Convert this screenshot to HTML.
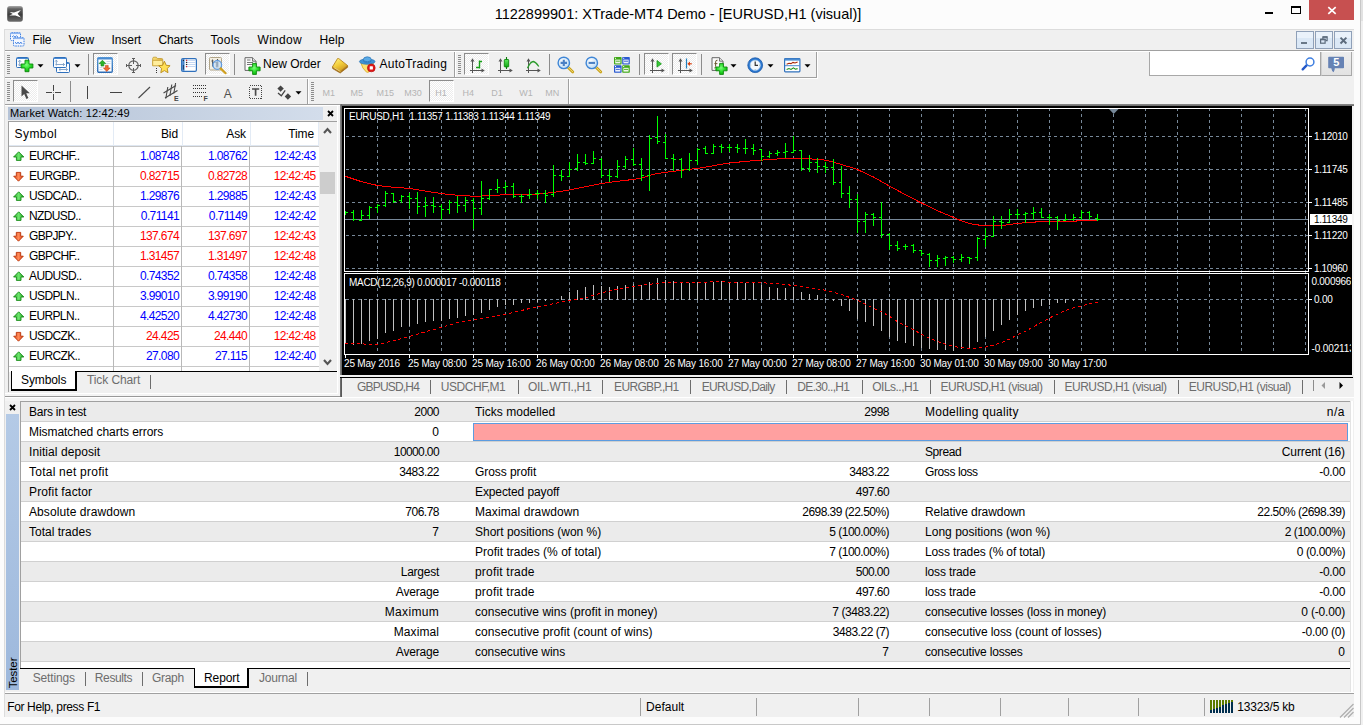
<!DOCTYPE html><html><head><meta charset="utf-8"><title>XTrade-MT4</title><style>html,body{margin:0;padding:0}
body{width:1363px;height:725px;overflow:hidden;position:relative;background:#fcfcfc;font-family:"Liberation Sans",sans-serif;font-size:12px;color:#000}
div,span.t,svg.abs{position:absolute;box-sizing:border-box}
.t{white-space:nowrap;line-height:16px;height:16px}
.r{text-align:right}
.ic{width:0;height:0}
.ic svg{position:absolute;left:0;top:0;overflow:visible}
.ui{font-size:12px;letter-spacing:-0.1px}
.tah{font-size:11px}
.ch{font-size:10px;letter-spacing:-0.21px;color:#fff;line-height:11px;height:11px}
.gr{color:#6d6d6d}
.blue{color:#0000ff}.red{color:#ff0000}
.dis{color:#b4b4b4}
.num{letter-spacing:-0.62px}
</style></head><body>
<div style="left:1360px;top:0px;width:1px;height:725px;background:#c8c8c8"></div>
<div style="left:1361px;top:0px;width:2px;height:725px;background:#f0f0f0"></div>
<div style="left:1361px;top:0px;width:2px;height:21px;background:#e2e2e2"></div>
<div style="left:0px;top:724px;width:1361px;height:1px;background:#c8c8c8"></div>
<div style="left:4px;top:29px;width:1350px;height:688px;background:#f0f0f0"></div>
<div style="left:4px;top:29px;width:1350px;height:1px;background:#dcdcdc"></div>
<div style="left:4px;top:29px;width:1px;height:688px;background:#dcdcdc"></div>
<span class="t" style="left:378px;top:5px;width:600px;text-align:center;font-size:14.5px;line-height:19px;height:19px;color:#000">1122899901: XTrade-MT4 Demo - [EURUSD,H1 (visual)]</span>
<div style="left:1309px;top:0px;width:45px;height:20px;background:#c75050"></div>
<svg class="abs" style="left:1309px;top:0" width="45" height="20"><path d="M19.3 7.200L26.700 13.900M26.700 7.200L19.300 13.900" stroke="#fff" stroke-width="1.700" fill="none"/></svg>
<div style="left:1265px;top:12px;width:8px;height:2px;background:#000"></div>
<div style="left:1291px;top:6px;width:10px;height:8px;border:1px solid #000;border-top:2px solid #000"></div>
<div style="left:340px;top:104px;width:1014px;height:2px;background:linear-gradient(#8c8c8c,#696969)"></div>
<div style="left:340px;top:104px;width:2px;height:271px;background:linear-gradient(90deg,#8c8c8c,#606060)"></div>
<div style="left:342px;top:106px;width:1010px;height:269px;background:#000"></div>
<div style="left:1352px;top:106px;width:2px;height:269px;background:#f4f4f4"></div>
<svg class="abs" style="left:342px;top:106px" width="1010" height="270" viewBox="342 106 1010 270" shape-rendering="crispEdges"><path d="M346 136.5H1308M346 169.5H1308M346 202.5H1308M346 235.5H1308M346 268.5H1308M346 299.5H1308" stroke="#778899" stroke-dasharray="3 3" fill="none"/><path d="M377.5 108V273M377.5 276V354M409.5 108V273M409.5 276V354M441.5 108V273M441.5 276V354M473.5 108V273M473.5 276V354M505.5 108V273M505.5 276V354M537.5 108V273M537.5 276V354M569.5 108V273M569.5 276V354M601.5 108V273M601.5 276V354M633.5 108V273M633.5 276V354M665.5 108V273M665.5 276V354M697.5 108V273M697.5 276V354M729.5 108V273M729.5 276V354M761.5 108V273M761.5 276V354M793.5 108V273M793.5 276V354M825.5 108V273M825.5 276V354M857.5 108V273M857.5 276V354M889.5 108V273M889.5 276V354M921.5 108V273M921.5 276V354M953.5 108V273M953.5 276V354M985.5 108V273M985.5 276V354M1017.5 108V273M1017.5 276V354M1049.5 108V273M1049.5 276V354M1081.5 108V273M1081.5 276V354M1113.5 108V273M1113.5 276V354M1145.5 108V273M1145.5 276V354M1177.5 108V273M1177.5 276V354M1209.5 108V273M1209.5 276V354M1241.5 108V273M1241.5 276V354M1273.5 108V273M1273.5 276V354M1305.5 108V273M1305.5 276V354" stroke="#778899" stroke-dasharray="3 3" fill="none"/><path d="M345 219.5H1308" stroke="#778899" fill="none"/><path d="M344.5 108.5H1308.5V271.5H344.5ZM344.5 273.5H1308.5V354.5H344.5Z" stroke="#fff" fill="none"/><path d="M1309 136.5H1312M1309 169.5H1312M1309 202.5H1312M1309 235.5H1312M1309 268.5H1312M1309 299.5H1312" stroke="#fff" fill="none"/><path d="M345.5 355V358M409.5 355V358M473.5 355V358M537.5 355V358M601.5 355V358M665.5 355V358M729.5 355V358M793.5 355V358M857.5 355V358M921.5 355V358M985.5 355V358M1049.5 355V358" stroke="#fff" fill="none"/><path d="M1109 109H1118.5L1113.7 114Z" fill="#778899" shape-rendering="auto"/><polyline points="345,176.2 361,181.5 377.5,185.5 393,187.2 409.5,188.4 425,191 441.5,193.6 457,195.2 473.5,196.2 489,195.8 505.5,194.6 521,194.5 530,194.8 537.5,194.2 553,192.5 569.5,190 585,186.8 601.5,183.4 617,181.4 633.5,179.4 641.4,178.2 649.4,175.3 657,173.6 665.5,172.4 681,170.3 697.5,168.4 713,165.8 720,164.5 729.5,163.1 745,161.4 761.5,160.1 777,159 793.5,158.2 809,158.8 825.5,160.1 833,162 841.5,164.5 849,166.8 857.5,169.6 865,173 873.5,177 881,181.3 889.5,186.1 905,194.5 921.5,203 937,210.5 953.5,217.4 961,220.6 969.5,223.6 977,224.9 985.5,225.5 1001.5,225.5 1009,224.6 1017.5,223.3 1025,222.8 1033.5,222.4 1038.7,221.4 1076,221.4 1077,220.3 1097,220.3" stroke="#ff0000" stroke-width="1" fill="none" shape-rendering="crispEdges"/><path d="M345 211h1V215h-1ZM346 212h2v1h-2ZM353 210h1V221h-1ZM351 212h2v1h-2ZM354 219h2v1h-2ZM361 210h1V221h-1ZM359 220h2v1h-2ZM362 215h2v1h-2ZM369 206h1V219h-1ZM367 215h2v1h-2ZM370 207h2v1h-2ZM377 204h1V213h-1ZM375 207h2v1h-2ZM378 205h2v1h-2ZM385 191h1V207h-1ZM383 205h2v1h-2ZM386 193h2v1h-2ZM393 193h1V203h-1ZM391 193h2v1h-2ZM394 201h2v1h-2ZM401 195h1V203h-1ZM399 200h2v1h-2ZM402 196h2v1h-2ZM409 193h1V209h-1ZM407 196h2v1h-2ZM410 198h2v1h-2ZM417 192h1V214h-1ZM415 198h2v1h-2ZM418 206h2v1h-2ZM425 197h1V217h-1ZM423 206h2v1h-2ZM426 205h2v1h-2ZM433 197h1V213h-1ZM431 205h2v1h-2ZM434 206h2v1h-2ZM441 204h1V220h-1ZM439 206h2v1h-2ZM442 209h2v1h-2ZM449 200h1V214h-1ZM447 209h2v1h-2ZM450 202h2v1h-2ZM457 196h1V213h-1ZM455 202h2v1h-2ZM458 205h2v1h-2ZM465 197h1V212h-1ZM463 205h2v1h-2ZM466 200h2v1h-2ZM473 198h1V229h-1ZM471 200h2v1h-2ZM474 208h2v1h-2ZM481 181h1V215h-1ZM479 208h2v1h-2ZM482 198h2v1h-2ZM489 189h1V200h-1ZM487 198h2v1h-2ZM490 189h2v1h-2ZM497 179h1V193h-1ZM495 189h2v1h-2ZM498 187h2v1h-2ZM505 182h1V193h-1ZM503 187h2v1h-2ZM506 186h2v1h-2ZM513 183h1V198h-1ZM511 186h2v1h-2ZM514 196h2v1h-2ZM521 194h1V203h-1ZM519 196h2v1h-2ZM522 196h2v1h-2ZM529 189h1V199h-1ZM527 195h2v1h-2ZM530 194h2v1h-2ZM537 190h1V199h-1ZM535 193h2v1h-2ZM538 193h2v1h-2ZM545 190h1V203h-1ZM543 193h2v1h-2ZM546 195h2v1h-2ZM553 165h1V197h-1ZM551 194h2v1h-2ZM554 175h2v1h-2ZM561 170h1V181h-1ZM559 175h2v1h-2ZM562 176h2v1h-2ZM569 162h1V177h-1ZM567 176h2v1h-2ZM570 169h2v1h-2ZM577 154h1V171h-1ZM575 168h2v1h-2ZM578 162h2v1h-2ZM585 154h1V165h-1ZM583 162h2v1h-2ZM586 163h2v1h-2ZM593 151h1V164h-1ZM591 163h2v1h-2ZM594 158h2v1h-2ZM601 158h1V178h-1ZM599 159h2v1h-2ZM602 175h2v1h-2ZM609 169h1V182h-1ZM607 175h2v1h-2ZM610 176h2v1h-2ZM617 160h1V178h-1ZM615 176h2v1h-2ZM618 166h2v1h-2ZM625 156h1V169h-1ZM623 166h2v1h-2ZM626 159h2v1h-2ZM633 148h1V166h-1ZM631 159h2v1h-2ZM634 164h2v1h-2ZM641 158h1V181h-1ZM639 164h2v1h-2ZM642 175h2v1h-2ZM649 135h1V191h-1ZM647 175h2v1h-2ZM650 138h2v1h-2ZM657 116h1V144h-1ZM655 137h2v1h-2ZM658 141h2v1h-2ZM665 134h1V159h-1ZM663 142h2v1h-2ZM666 158h2v1h-2ZM673 154h1V171h-1ZM671 158h2v1h-2ZM674 159h2v1h-2ZM681 158h1V178h-1ZM679 159h2v1h-2ZM682 169h2v1h-2ZM689 153h1V171h-1ZM687 169h2v1h-2ZM690 160h2v1h-2ZM697 148h1V165h-1ZM695 160h2v1h-2ZM698 149h2v1h-2ZM705 146h1V154h-1ZM703 148h2v1h-2ZM706 153h2v1h-2ZM713 144h1V154h-1ZM711 153h2v1h-2ZM714 146h2v1h-2ZM721 144h1V153h-1ZM719 146h2v1h-2ZM722 147h2v1h-2ZM729 144h1V152h-1ZM727 147h2v1h-2ZM730 147h2v1h-2ZM737 144h1V153h-1ZM735 147h2v1h-2ZM738 148h2v1h-2ZM745 139h1V154h-1ZM743 148h2v1h-2ZM746 148h2v1h-2ZM753 144h1V155h-1ZM751 148h2v1h-2ZM754 150h2v1h-2ZM761 149h1V161h-1ZM759 149h2v1h-2ZM762 156h2v1h-2ZM769 151h1V158h-1ZM767 156h2v1h-2ZM770 153h2v1h-2ZM777 150h1V156h-1ZM775 153h2v1h-2ZM778 152h2v1h-2ZM785 143h1V158h-1ZM783 152h2v1h-2ZM786 151h2v1h-2ZM793 136h1V153h-1ZM791 152h2v1h-2ZM794 150h2v1h-2ZM801 150h1V171h-1ZM799 150h2v1h-2ZM802 168h2v1h-2ZM809 155h1V172h-1ZM807 168h2v1h-2ZM810 162h2v1h-2ZM817 158h1V173h-1ZM815 162h2v1h-2ZM818 166h2v1h-2ZM825 162h1V173h-1ZM823 166h2v1h-2ZM826 167h2v1h-2ZM833 159h1V185h-1ZM831 167h2v1h-2ZM834 182h2v1h-2ZM841 166h1V198h-1ZM839 182h2v1h-2ZM842 193h2v1h-2ZM849 186h1V208h-1ZM847 193h2v1h-2ZM850 199h2v1h-2ZM857 194h1V233h-1ZM855 199h2v1h-2ZM858 221h2v1h-2ZM865 212h1V233h-1ZM863 221h2v1h-2ZM866 214h2v1h-2ZM873 213h1V226h-1ZM871 214h2v1h-2ZM874 217h2v1h-2ZM881 202h1V238h-1ZM879 217h2v1h-2ZM882 234h2v1h-2ZM889 233h1V250h-1ZM887 234h2v1h-2ZM890 245h2v1h-2ZM897 241h1V251h-1ZM895 245h2v1h-2ZM898 248h2v1h-2ZM905 244h1V250h-1ZM903 246h2v1h-2ZM906 246h2v1h-2ZM913 244h1V253h-1ZM911 245h2v1h-2ZM914 250h2v1h-2ZM921 250h1V256h-1ZM919 250h2v1h-2ZM922 253h2v1h-2ZM929 253h1V267h-1ZM927 254h2v1h-2ZM930 260h2v1h-2ZM937 255h1V267h-1ZM935 260h2v1h-2ZM938 258h2v1h-2ZM945 256h1V266h-1ZM943 258h2v1h-2ZM946 257h2v1h-2ZM953 256h1V263h-1ZM951 257h2v1h-2ZM954 259h2v1h-2ZM961 254h1V262h-1ZM959 259h2v1h-2ZM962 257h2v1h-2ZM969 257h1V264h-1ZM967 257h2v1h-2ZM970 258h2v1h-2ZM977 237h1V261h-1ZM975 257h2v1h-2ZM978 238h2v1h-2ZM985 228h1V247h-1ZM983 239h2v1h-2ZM986 236h2v1h-2ZM993 216h1V237h-1ZM991 236h2v1h-2ZM994 221h2v1h-2ZM1001 216h1V229h-1ZM999 221h2v1h-2ZM1002 222h2v1h-2ZM1009 209h1V223h-1ZM1007 222h2v1h-2ZM1010 214h2v1h-2ZM1017 209h1V219h-1ZM1015 214h2v1h-2ZM1018 214h2v1h-2ZM1025 212h1V223h-1ZM1023 214h2v1h-2ZM1026 213h2v1h-2ZM1033 207h1V220h-1ZM1031 213h2v1h-2ZM1034 212h2v1h-2ZM1041 208h1V218h-1ZM1039 212h2v1h-2ZM1042 217h2v1h-2ZM1049 214h1V225h-1ZM1047 217h2v1h-2ZM1050 217h2v1h-2ZM1057 216h1V230h-1ZM1055 217h2v1h-2ZM1058 220h2v1h-2ZM1065 214h1V221h-1ZM1063 220h2v1h-2ZM1066 219h2v1h-2ZM1073 214h1V221h-1ZM1071 219h2v1h-2ZM1074 217h2v1h-2ZM1081 210h1V220h-1ZM1079 217h2v1h-2ZM1082 212h2v1h-2ZM1089 211h1V220h-1ZM1087 212h2v1h-2ZM1090 216h2v1h-2ZM1097 214h1V221h-1ZM1095 218h2v1h-2ZM1098 219h2v1h-2Z" fill="#00ff00"/><path d="M345 299h1V344h-1ZM353 299h1V345h-1ZM361 299h1V344h-1ZM369 299h1V341h-1ZM377 299h1V339h-1ZM385 299h1V333h-1ZM393 299h1V331h-1ZM401 299h1V327h-1ZM409 299h1V326h-1ZM417 299h1V324h-1ZM425 299h1V322h-1ZM433 299h1V321h-1ZM441 299h1V321h-1ZM449 299h1V319h-1ZM457 299h1V318h-1ZM465 299h1V316h-1ZM473 299h1V315h-1ZM481 299h1V313h-1ZM489 299h1V310h-1ZM497 299h1V307h-1ZM505 299h1V305h-1ZM513 299h1V305h-1ZM521 299h1V303h-1ZM529 299h1V303h-1ZM537 299h1V302h-1ZM545 299h1V301h-1ZM561 296h1V300h-1ZM569 292h1V300h-1ZM577 290h1V300h-1ZM585 287h1V300h-1ZM593 285h1V300h-1ZM601 286h1V300h-1ZM609 287h1V300h-1ZM617 286h1V300h-1ZM625 285h1V300h-1ZM633 284h1V300h-1ZM641 285h1V300h-1ZM649 282h1V300h-1ZM657 278h1V300h-1ZM665 280h1V300h-1ZM673 281h1V300h-1ZM681 283h1V300h-1ZM689 283h1V300h-1ZM697 282h1V300h-1ZM705 283h1V300h-1ZM713 282h1V300h-1ZM721 281h1V300h-1ZM729 282h1V300h-1ZM737 282h1V300h-1ZM745 283h1V300h-1ZM753 283h1V300h-1ZM761 285h1V300h-1ZM769 287h1V300h-1ZM777 288h1V300h-1ZM785 288h1V300h-1ZM793 287h1V300h-1ZM801 292h1V300h-1ZM809 294h1V300h-1ZM817 295h1V300h-1ZM825 298h1V300h-1ZM833 299h1V301h-1ZM841 299h1V306h-1ZM849 299h1V311h-1ZM857 299h1V319h-1ZM865 299h1V322h-1ZM873 299h1V326h-1ZM881 299h1V331h-1ZM889 299h1V337h-1ZM897 299h1V341h-1ZM905 299h1V343h-1ZM913 299h1V346h-1ZM921 299h1V348h-1ZM929 299h1V349h-1ZM937 299h1V350h-1ZM945 299h1V350h-1ZM953 299h1V351h-1ZM961 299h1V349h-1ZM969 299h1V348h-1ZM977 299h1V342h-1ZM985 299h1V337h-1ZM993 299h1V331h-1ZM1001 299h1V325h-1ZM1009 299h1V320h-1ZM1017 299h1V315h-1ZM1025 299h1V311h-1ZM1033 299h1V308h-1ZM1041 299h1V306h-1ZM1049 299h1V305h-1ZM1057 299h1V303h-1ZM1065 299h1V303h-1ZM1073 299h1V301h-1ZM1081 299h1V301h-1Z" fill="#c0c0c0"/><polyline points="345,343.6 377.5,344.3 393.5,340.9 409.5,336.5 425.5,331.8 441.5,327.4 457.5,322.6 473.5,320.1 489.5,317.2 505.5,314.2 521.5,310.5 530,308.4 537.5,306.9 553.5,303.7 569.5,300.3 585.5,297.8 601.5,292.9 617.5,289.3 633.5,286.3 649.5,284.4 657.4,283.1 673.4,282.4 697.5,282.4 721.5,281.5 729.5,282.4 761.5,282.4 769.5,283.4 785.4,284.4 793.5,285.6 809.5,287.5 825.5,290.3 833.4,292.2 841.5,294.4 849.4,297.3 857.5,300.3 865.4,304.4 873.5,308.4 881.4,311.7 889.5,316.4 897.4,321.6 905.5,325.7 913.4,329.6 921.5,334.5 929.5,338.1 937.5,341.4 945.5,344.3 953.5,346.5 961.5,347.7 969.5,348.3 977.5,348.2 985.5,347.2 993.5,345 1001.5,342.5 1009.5,339.2 1017.5,334.8 1025.5,331.4 1033.5,326.7 1041.5,322.3 1049.5,317.9 1057.5,314.2 1065.5,310.6 1073.5,307.9 1081.5,305.9 1089.5,303.7 1097.5,302.2" stroke="#ff0000" stroke-width="1" stroke-dasharray="3 3" fill="none" shape-rendering="crispEdges"/><rect x="1310" y="214" width="42" height="11" fill="#fff"/></svg>
<div style="left:342px;top:106px;width:1009px;height:269px;overflow:hidden">
<span class="t ch" style="left:7px;top:5px;letter-spacing:-0.284px;">EURUSD,H1&nbsp; 1.11357 1.11383 1.11344 1.11349</span>
<span class="t ch" style="left:7px;top:171px;letter-spacing:-0.295px;">MACD(12,26,9) 0.000017 -0.000118</span>
<span class="t ch" style="left:972px;top:25px;letter-spacing:-0.379px;">1.12010</span>
<span class="t ch" style="left:972px;top:58px;letter-spacing:-0.272px;">1.11745</span>
<span class="t ch" style="left:972px;top:91px;letter-spacing:-0.272px;">1.11485</span>
<span class="t ch" style="left:972px;top:124px;letter-spacing:-0.272px;">1.11220</span>
<span class="t ch" style="left:972px;top:157px;letter-spacing:-0.379px;">1.10960</span>
<span class="t ch" style="left:969.5px;top:170px;letter-spacing:-0.265px;">0.000966</span>
<span class="t ch" style="left:972px;top:188px;">0.00</span>
<span class="t ch" style="left:969.5px;top:237px;letter-spacing:-0.122px;">-0.002113</span>
<span class="t ch" style="left:972px;top:108px;color:#000;letter-spacing:-0.272px;">1.11349</span>
<span class="t ch" style="left:2px;top:252.3px;letter-spacing:-0.184px;">25 May 2016</span>
<span class="t ch" style="left:66px;top:252.3px;letter-spacing:-0.167px;">25 May 08:00</span>
<span class="t ch" style="left:130px;top:252.3px;letter-spacing:-0.167px;">25 May 16:00</span>
<span class="t ch" style="left:194px;top:252.3px;letter-spacing:-0.167px;">26 May 00:00</span>
<span class="t ch" style="left:258px;top:252.3px;letter-spacing:-0.167px;">26 May 08:00</span>
<span class="t ch" style="left:322px;top:252.3px;letter-spacing:-0.167px;">26 May 16:00</span>
<span class="t ch" style="left:386px;top:252.3px;letter-spacing:-0.167px;">27 May 00:00</span>
<span class="t ch" style="left:450px;top:252.3px;letter-spacing:-0.167px;">27 May 08:00</span>
<span class="t ch" style="left:514px;top:252.3px;letter-spacing:-0.167px;">27 May 16:00</span>
<span class="t ch" style="left:578px;top:252.3px;letter-spacing:-0.167px;">30 May 01:00</span>
<span class="t ch" style="left:642px;top:252.3px;letter-spacing:-0.167px;">30 May 09:00</span>
<span class="t ch" style="left:706px;top:252.3px;letter-spacing:-0.167px;">30 May 17:00</span>
</div>
<div style="left:8px;top:107px;width:315px;height:13px;background:linear-gradient(90deg,#b5c3d7,#d3ddeb)"></div>
<span class="t tah" style="left:10px;top:105px;line-height:16px;letter-spacing:0.15px">Market Watch: 12:42:49</span>
<svg class="abs" style="left:327px;top:110px" width="8" height="8"><path d="M1 1L6 6M6 1L1 6" stroke="#000" stroke-width="1.8" fill="none"/></svg>
<div style="left:8px;top:121px;width:330px;height:251px;background:#fff;border-top:1px solid #a0a0a0;border-left:1px solid #a0a0a0"></div>
<div style="left:9px;top:145px;width:310px;height:1px;background:#dfe7f1"></div>
<div style="left:113px;top:122px;width:1px;height:24px;background:#e3ebf5"></div>
<div style="left:182px;top:122px;width:1px;height:24px;background:#e3ebf5"></div>
<div style="left:250px;top:122px;width:1px;height:24px;background:#e3ebf5"></div>
<div style="left:318px;top:122px;width:1px;height:24px;background:#e3ebf5"></div>
<span class="t" style="left:14.5px;top:126px;letter-spacing:0.45px">Symbol</span>
<span class="t r ui" style="left:-122px;width:300px;top:126px;">Bid</span>
<span class="t r ui" style="left:-54px;width:300px;top:126px;">Ask</span>
<span class="t r ui" style="left:14px;width:300px;top:126px;">Time</span>
<div style="left:9px;top:146px;width:310px;height:1px;background:#c8c8c8"></div>
<div style="left:9px;top:166px;width:310px;height:1px;background:#c8c8c8"></div>
<span class="t ui" style="left:29px;top:148px;letter-spacing:-0.62px">EURCHF..</span>
<span class="t r ui num blue" style="left:-121px;width:300px;top:148px;">1.08748</span>
<span class="t r ui num blue" style="left:-53px;width:300px;top:148px;">1.08762</span>
<span class="t r ui num blue" style="left:15.5px;width:300px;top:148px;">12:42:43</span>
<div class="ic" style="left:13px;top:150.5px"><svg width="12" height="11" viewBox="0 0 12 11"><defs><linearGradient id="gU" x1="0" y1="0" x2="1" y2="0"><stop offset="0" stop-color="#22a822"/><stop offset="0.5" stop-color="#6fe86f"/><stop offset="1" stop-color="#1c9c1c"/></linearGradient></defs><path d="M5.7 0.800L10.800 6H8V9.400H3.400V6H0.600Z" fill="url(#gU)" stroke="#178a17" stroke-width="0.9" stroke-linejoin="round"/></svg></div>
<div style="left:9px;top:186px;width:310px;height:1px;background:#c8c8c8"></div>
<span class="t ui" style="left:29px;top:168px;letter-spacing:-0.62px">EURGBP..</span>
<span class="t r ui num red" style="left:-121px;width:300px;top:168px;">0.82715</span>
<span class="t r ui num red" style="left:-53px;width:300px;top:168px;">0.82728</span>
<span class="t r ui num red" style="left:15.5px;width:300px;top:168px;">12:42:45</span>
<div class="ic" style="left:13px;top:170.5px"><svg width="12" height="11" viewBox="0 0 12 11"><defs><linearGradient id="gD" x1="0" y1="0" x2="1" y2="0"><stop offset="0" stop-color="#e04818"/><stop offset="0.5" stop-color="#ff8a58"/><stop offset="1" stop-color="#d83c10"/></linearGradient></defs><path d="M5.500 10.200L0.700 5.200H3.300V1.400H7.700V5.200H10.300Z" fill="url(#gD)" stroke="#b83208" stroke-width="0.9" stroke-linejoin="round"/></svg></div>
<div style="left:9px;top:206px;width:310px;height:1px;background:#c8c8c8"></div>
<span class="t ui" style="left:29px;top:188px;letter-spacing:-0.62px">USDCAD..</span>
<span class="t r ui num blue" style="left:-121px;width:300px;top:188px;">1.29876</span>
<span class="t r ui num blue" style="left:-53px;width:300px;top:188px;">1.29885</span>
<span class="t r ui num blue" style="left:15.5px;width:300px;top:188px;">12:42:43</span>
<div class="ic" style="left:13px;top:190.5px"><svg width="12" height="11" viewBox="0 0 12 11"><defs><linearGradient id="gU" x1="0" y1="0" x2="1" y2="0"><stop offset="0" stop-color="#22a822"/><stop offset="0.5" stop-color="#6fe86f"/><stop offset="1" stop-color="#1c9c1c"/></linearGradient></defs><path d="M5.7 0.800L10.800 6H8V9.400H3.400V6H0.600Z" fill="url(#gU)" stroke="#178a17" stroke-width="0.9" stroke-linejoin="round"/></svg></div>
<div style="left:9px;top:226px;width:310px;height:1px;background:#c8c8c8"></div>
<span class="t ui" style="left:29px;top:208px;letter-spacing:-0.62px">NZDUSD..</span>
<span class="t r ui num blue" style="left:-121px;width:300px;top:208px;">0.71141</span>
<span class="t r ui num blue" style="left:-53px;width:300px;top:208px;">0.71149</span>
<span class="t r ui num blue" style="left:15.5px;width:300px;top:208px;">12:42:42</span>
<div class="ic" style="left:13px;top:210.5px"><svg width="12" height="11" viewBox="0 0 12 11"><defs><linearGradient id="gU" x1="0" y1="0" x2="1" y2="0"><stop offset="0" stop-color="#22a822"/><stop offset="0.5" stop-color="#6fe86f"/><stop offset="1" stop-color="#1c9c1c"/></linearGradient></defs><path d="M5.7 0.800L10.800 6H8V9.400H3.400V6H0.600Z" fill="url(#gU)" stroke="#178a17" stroke-width="0.9" stroke-linejoin="round"/></svg></div>
<div style="left:9px;top:246px;width:310px;height:1px;background:#c8c8c8"></div>
<span class="t ui" style="left:29px;top:228px;letter-spacing:-0.62px">GBPJPY..</span>
<span class="t r ui num red" style="left:-121px;width:300px;top:228px;">137.674</span>
<span class="t r ui num red" style="left:-53px;width:300px;top:228px;">137.697</span>
<span class="t r ui num red" style="left:15.5px;width:300px;top:228px;">12:42:43</span>
<div class="ic" style="left:13px;top:230.5px"><svg width="12" height="11" viewBox="0 0 12 11"><defs><linearGradient id="gD" x1="0" y1="0" x2="1" y2="0"><stop offset="0" stop-color="#e04818"/><stop offset="0.5" stop-color="#ff8a58"/><stop offset="1" stop-color="#d83c10"/></linearGradient></defs><path d="M5.500 10.200L0.700 5.200H3.300V1.400H7.700V5.200H10.300Z" fill="url(#gD)" stroke="#b83208" stroke-width="0.9" stroke-linejoin="round"/></svg></div>
<div style="left:9px;top:266px;width:310px;height:1px;background:#c8c8c8"></div>
<span class="t ui" style="left:29px;top:248px;letter-spacing:-0.62px">GBPCHF..</span>
<span class="t r ui num red" style="left:-121px;width:300px;top:248px;">1.31457</span>
<span class="t r ui num red" style="left:-53px;width:300px;top:248px;">1.31497</span>
<span class="t r ui num red" style="left:15.5px;width:300px;top:248px;">12:42:48</span>
<div class="ic" style="left:13px;top:250.5px"><svg width="12" height="11" viewBox="0 0 12 11"><defs><linearGradient id="gD" x1="0" y1="0" x2="1" y2="0"><stop offset="0" stop-color="#e04818"/><stop offset="0.5" stop-color="#ff8a58"/><stop offset="1" stop-color="#d83c10"/></linearGradient></defs><path d="M5.500 10.200L0.700 5.200H3.300V1.400H7.700V5.200H10.300Z" fill="url(#gD)" stroke="#b83208" stroke-width="0.9" stroke-linejoin="round"/></svg></div>
<div style="left:9px;top:286px;width:310px;height:1px;background:#c8c8c8"></div>
<span class="t ui" style="left:29px;top:268px;letter-spacing:-0.62px">AUDUSD..</span>
<span class="t r ui num blue" style="left:-121px;width:300px;top:268px;">0.74352</span>
<span class="t r ui num blue" style="left:-53px;width:300px;top:268px;">0.74358</span>
<span class="t r ui num blue" style="left:15.5px;width:300px;top:268px;">12:42:48</span>
<div class="ic" style="left:13px;top:270.5px"><svg width="12" height="11" viewBox="0 0 12 11"><defs><linearGradient id="gU" x1="0" y1="0" x2="1" y2="0"><stop offset="0" stop-color="#22a822"/><stop offset="0.5" stop-color="#6fe86f"/><stop offset="1" stop-color="#1c9c1c"/></linearGradient></defs><path d="M5.7 0.800L10.800 6H8V9.400H3.400V6H0.600Z" fill="url(#gU)" stroke="#178a17" stroke-width="0.9" stroke-linejoin="round"/></svg></div>
<div style="left:9px;top:306px;width:310px;height:1px;background:#c8c8c8"></div>
<span class="t ui" style="left:29px;top:288px;letter-spacing:-0.62px">USDPLN..</span>
<span class="t r ui num blue" style="left:-121px;width:300px;top:288px;">3.99010</span>
<span class="t r ui num blue" style="left:-53px;width:300px;top:288px;">3.99190</span>
<span class="t r ui num blue" style="left:15.5px;width:300px;top:288px;">12:42:48</span>
<div class="ic" style="left:13px;top:290.5px"><svg width="12" height="11" viewBox="0 0 12 11"><defs><linearGradient id="gU" x1="0" y1="0" x2="1" y2="0"><stop offset="0" stop-color="#22a822"/><stop offset="0.5" stop-color="#6fe86f"/><stop offset="1" stop-color="#1c9c1c"/></linearGradient></defs><path d="M5.7 0.800L10.800 6H8V9.400H3.400V6H0.600Z" fill="url(#gU)" stroke="#178a17" stroke-width="0.9" stroke-linejoin="round"/></svg></div>
<div style="left:9px;top:326px;width:310px;height:1px;background:#c8c8c8"></div>
<span class="t ui" style="left:29px;top:308px;letter-spacing:-0.62px">EURPLN..</span>
<span class="t r ui num blue" style="left:-121px;width:300px;top:308px;">4.42520</span>
<span class="t r ui num blue" style="left:-53px;width:300px;top:308px;">4.42730</span>
<span class="t r ui num blue" style="left:15.5px;width:300px;top:308px;">12:42:48</span>
<div class="ic" style="left:13px;top:310.5px"><svg width="12" height="11" viewBox="0 0 12 11"><defs><linearGradient id="gU" x1="0" y1="0" x2="1" y2="0"><stop offset="0" stop-color="#22a822"/><stop offset="0.5" stop-color="#6fe86f"/><stop offset="1" stop-color="#1c9c1c"/></linearGradient></defs><path d="M5.7 0.800L10.800 6H8V9.400H3.400V6H0.600Z" fill="url(#gU)" stroke="#178a17" stroke-width="0.9" stroke-linejoin="round"/></svg></div>
<div style="left:9px;top:346px;width:310px;height:1px;background:#c8c8c8"></div>
<span class="t ui" style="left:29px;top:328px;letter-spacing:-0.62px">USDCZK..</span>
<span class="t r ui num red" style="left:-121px;width:300px;top:328px;">24.425</span>
<span class="t r ui num red" style="left:-53px;width:300px;top:328px;">24.440</span>
<span class="t r ui num red" style="left:15.5px;width:300px;top:328px;">12:42:48</span>
<div class="ic" style="left:13px;top:330.5px"><svg width="12" height="11" viewBox="0 0 12 11"><defs><linearGradient id="gD" x1="0" y1="0" x2="1" y2="0"><stop offset="0" stop-color="#e04818"/><stop offset="0.5" stop-color="#ff8a58"/><stop offset="1" stop-color="#d83c10"/></linearGradient></defs><path d="M5.500 10.200L0.700 5.200H3.300V1.400H7.700V5.200H10.300Z" fill="url(#gD)" stroke="#b83208" stroke-width="0.9" stroke-linejoin="round"/></svg></div>
<div style="left:9px;top:366px;width:310px;height:1px;background:#c8c8c8"></div>
<span class="t ui" style="left:29px;top:348px;letter-spacing:-0.62px">EURCZK..</span>
<span class="t r ui num blue" style="left:-121px;width:300px;top:348px;">27.080</span>
<span class="t r ui num blue" style="left:-53px;width:300px;top:348px;">27.115</span>
<span class="t r ui num blue" style="left:15.5px;width:300px;top:348px;">12:42:40</span>
<div class="ic" style="left:13px;top:350.5px"><svg width="12" height="11" viewBox="0 0 12 11"><defs><linearGradient id="gU" x1="0" y1="0" x2="1" y2="0"><stop offset="0" stop-color="#22a822"/><stop offset="0.5" stop-color="#6fe86f"/><stop offset="1" stop-color="#1c9c1c"/></linearGradient></defs><path d="M5.7 0.800L10.800 6H8V9.400H3.400V6H0.600Z" fill="url(#gU)" stroke="#178a17" stroke-width="0.9" stroke-linejoin="round"/></svg></div>
<div style="left:113px;top:146px;width:1px;height:226px;background:#b9b9b9"></div>
<div style="left:181px;top:146px;width:1px;height:226px;background:#b9b9b9"></div>
<div style="left:249px;top:146px;width:1px;height:226px;background:#b9b9b9"></div>
<div style="left:319px;top:122px;width:18px;height:250px;background:#f0f0f0"></div>
<div style="left:320px;top:172px;width:15px;height:22px;background:#cdcdcd"></div>
<svg class="abs" style="left:323px;top:127px" width="10" height="8"><path d="M1 6L4.5 2L8 6" stroke="#555" stroke-width="2.1" fill="none"/></svg>
<svg class="abs" style="left:323px;top:358px" width="10" height="8"><path d="M1 2L4.5 6L8 2" stroke="#555" stroke-width="2.1" fill="none"/></svg>
<div style="left:8px;top:371px;width:1px;height:21px;background:#a0a0a0"></div>
<div style="left:76px;top:371px;width:261px;height:1px;background:#000"></div>
<div style="left:11px;top:371px;width:66px;height:20px;background:#fff;border:1px solid #000;border-top:none;border-right:2px solid #000;border-bottom:2px solid #000"></div>
<span class="t ui" style="left:21px;top:372px;">Symbols</span>
<span class="t ui gr" style="left:87px;top:372px;">Tick Chart</span>
<div style="left:150px;top:375px;width:1px;height:14px;background:#6d6d6d"></div>
<div style="left:337px;top:106px;width:1px;height:288px;background:#fff"></div>
<div style="left:338px;top:106px;width:2px;height:290px;background:#f4f4f4"></div>
<div style="left:5px;top:393px;width:333px;height:1px;background:#fff"></div>
<div style="left:5px;top:394px;width:335px;height:2px;background:#f4f4f4"></div>
<div style="left:5px;top:396px;width:337px;height:1px;background:#999"></div>
<div style="left:5px;top:397px;width:1349px;height:1px;background:#fff"></div>
<div style="left:5px;top:398px;width:1349px;height:3px;background:#f4f4f4"></div>
<div style="left:6px;top:414px;width:13px;height:276px;background:linear-gradient(#b4cae6,#9db8dc)"></div>
<svg class="abs" style="left:9px;top:404px" width="8" height="8"><path d="M1 1L6 6M6 1L1 6" stroke="#000" stroke-width="1.8" fill="none"/></svg>
<span class="t ui" style="left:-7px;top:665px;width:40px;text-align:center;font-size:11.5px;transform:rotate(-90deg);transform-origin:center center;">Tester</span>
<div style="left:20px;top:401px;width:1330px;height:268px;background:#fff;border-top:1px solid #a0a0a0;border-left:1px solid #a0a0a0"></div>
<div style="left:1350px;top:401px;width:1px;height:291px;background:#e3e3e3"></div>
<div style="left:1351px;top:401px;width:2px;height:291px;background:#fff"></div>
<div style="left:21px;top:402px;width:1329px;height:19px;background:#ebebeb"></div>
<div style="left:21px;top:421px;width:1329px;height:1px;background:#d0d0d0"></div>
<span class="t" style="left:29px;top:404px;letter-spacing:-0.236px">Bars in test</span>
<span class="t r" style="left:139px;width:300px;top:404px;letter-spacing:-0.501px">2000</span>
<span class="t" style="left:475px;top:404px;letter-spacing:0.043px">Ticks modelled</span>
<span class="t r" style="left:589px;width:300px;top:404px;letter-spacing:-0.501px">2998</span>
<span class="t" style="left:925px;top:404px;letter-spacing:0.253px">Modelling quality</span>
<span class="t r" style="left:1045px;width:300px;top:404px;letter-spacing:0.504px">n/a</span>
<div style="left:21px;top:441px;width:1329px;height:1px;background:#d0d0d0"></div>
<span class="t" style="left:29px;top:424px;letter-spacing:-0.049px">Mismatched charts errors</span>
<span class="t r" style="left:139px;width:300px;top:424px;">0</span>
<div style="left:21px;top:442px;width:1329px;height:19px;background:#ebebeb"></div>
<div style="left:21px;top:461px;width:1329px;height:1px;background:#d0d0d0"></div>
<span class="t" style="left:29px;top:444px;letter-spacing:0.077px">Initial deposit</span>
<span class="t r" style="left:139px;width:300px;top:444px;letter-spacing:-0.608px">10000.00</span>
<span class="t" style="left:925px;top:444px;letter-spacing:-0.417px">Spread</span>
<span class="t r" style="left:1045px;width:300px;top:444px;letter-spacing:-0.124px">Current (16)</span>
<div style="left:21px;top:481px;width:1329px;height:1px;background:#d0d0d0"></div>
<span class="t" style="left:29px;top:464px;letter-spacing:0.239px">Total net profit</span>
<span class="t r" style="left:139px;width:300px;top:464px;letter-spacing:-0.527px">3483.22</span>
<span class="t" style="left:475px;top:464px;letter-spacing:-0.068px">Gross profit</span>
<span class="t r" style="left:589px;width:300px;top:464px;letter-spacing:-0.527px">3483.22</span>
<span class="t" style="left:925px;top:464px;letter-spacing:-0.399px">Gross loss</span>
<span class="t r" style="left:1045px;width:300px;top:464px;letter-spacing:-0.332px">-0.00</span>
<div style="left:21px;top:482px;width:1329px;height:19px;background:#ebebeb"></div>
<div style="left:21px;top:501px;width:1329px;height:1px;background:#d0d0d0"></div>
<span class="t" style="left:29px;top:484px;letter-spacing:0.142px">Profit factor</span>
<span class="t" style="left:475px;top:484px;letter-spacing:-0.11px">Expected payoff</span>
<span class="t r" style="left:589px;width:300px;top:484px;letter-spacing:-0.584px">497.60</span>
<div style="left:21px;top:521px;width:1329px;height:1px;background:#d0d0d0"></div>
<span class="t" style="left:29px;top:504px;letter-spacing:0.086px">Absolute drawdown</span>
<span class="t r" style="left:139px;width:300px;top:504px;letter-spacing:-0.501px">706.78</span>
<span class="t" style="left:475px;top:504px;letter-spacing:0.094px">Maximal drawdown</span>
<span class="t r" style="left:589px;width:300px;top:504px;letter-spacing:-0.544px">2698.39 (22.50%)</span>
<span class="t" style="left:925px;top:504px;letter-spacing:-0.07px">Relative drawdown</span>
<span class="t r" style="left:1045px;width:300px;top:504px;letter-spacing:-0.482px">22.50% (2698.39)</span>
<div style="left:21px;top:522px;width:1329px;height:19px;background:#ebebeb"></div>
<div style="left:21px;top:541px;width:1329px;height:1px;background:#d0d0d0"></div>
<span class="t" style="left:29px;top:524px;letter-spacing:0.013px">Total trades</span>
<span class="t r" style="left:139px;width:300px;top:524px;">7</span>
<span class="t" style="left:475px;top:524px;letter-spacing:-0.023px">Short positions (won %)</span>
<span class="t r" style="left:589px;width:300px;top:524px;letter-spacing:-0.516px">5 (100.00%)</span>
<span class="t" style="left:925px;top:524px;letter-spacing:0.021px">Long positions (won %)</span>
<span class="t r" style="left:1045px;width:300px;top:524px;letter-spacing:-0.47px">2 (100.00%)</span>
<div style="left:21px;top:561px;width:1329px;height:1px;background:#d0d0d0"></div>
<span class="t" style="left:475px;top:544px;letter-spacing:0.006px">Profit trades (% of total)</span>
<span class="t r" style="left:589px;width:300px;top:544px;letter-spacing:-0.516px">7 (100.00%)</span>
<span class="t" style="left:925px;top:544px;letter-spacing:-0.133px">Loss trades (% of total)</span>
<span class="t r" style="left:1045px;width:300px;top:544px;letter-spacing:-0.426px">0 (0.00%)</span>
<div style="left:21px;top:562px;width:1329px;height:19px;background:#ebebeb"></div>
<div style="left:21px;top:581px;width:1329px;height:1px;background:#d0d0d0"></div>
<span class="t r" style="left:139px;width:300px;top:564px;letter-spacing:-0.262px">Largest</span>
<span class="t" style="left:475px;top:564px;letter-spacing:0.194px">profit trade</span>
<span class="t r" style="left:589px;width:300px;top:564px;letter-spacing:-0.584px">500.00</span>
<span class="t" style="left:925px;top:564px;letter-spacing:-0.133px">loss trade</span>
<span class="t r" style="left:1045px;width:300px;top:564px;letter-spacing:-0.332px">-0.00</span>
<div style="left:21px;top:601px;width:1329px;height:1px;background:#d0d0d0"></div>
<span class="t r" style="left:139px;width:300px;top:584px;letter-spacing:-0.183px">Average</span>
<span class="t" style="left:475px;top:584px;letter-spacing:0.194px">profit trade</span>
<span class="t r" style="left:589px;width:300px;top:584px;letter-spacing:-0.584px">497.60</span>
<span class="t" style="left:925px;top:584px;letter-spacing:-0.133px">loss trade</span>
<span class="t r" style="left:1045px;width:300px;top:584px;letter-spacing:-0.332px">-0.00</span>
<div style="left:21px;top:602px;width:1329px;height:19px;background:#ebebeb"></div>
<div style="left:21px;top:621px;width:1329px;height:1px;background:#d0d0d0"></div>
<span class="t r" style="left:139px;width:300px;top:604px;letter-spacing:0.312px">Maximum</span>
<span class="t" style="left:475px;top:604px;letter-spacing:0.057px">consecutive wins (profit in money)</span>
<span class="t r" style="left:589px;width:300px;top:604px;letter-spacing:-0.426px">7 (3483.22)</span>
<span class="t" style="left:925px;top:604px;letter-spacing:-0.124px">consecutive losses (loss in money)</span>
<span class="t r" style="left:1045px;width:300px;top:604px;letter-spacing:-0.184px">0 (-0.00)</span>
<div style="left:21px;top:641px;width:1329px;height:1px;background:#d0d0d0"></div>
<span class="t r" style="left:139px;width:300px;top:624px;letter-spacing:0.075px">Maximal</span>
<span class="t" style="left:475px;top:624px;letter-spacing:0.087px">consecutive profit (count of wins)</span>
<span class="t r" style="left:589px;width:300px;top:624px;letter-spacing:-0.472px">3483.22 (7)</span>
<span class="t" style="left:925px;top:624px;letter-spacing:-0.08px">consecutive loss (count of losses)</span>
<span class="t r" style="left:1045px;width:300px;top:624px;letter-spacing:-0.24px">-0.00 (0)</span>
<div style="left:21px;top:642px;width:1329px;height:19px;background:#ebebeb"></div>
<div style="left:21px;top:661px;width:1329px;height:1px;background:#d0d0d0"></div>
<span class="t r" style="left:139px;width:300px;top:644px;letter-spacing:-0.183px">Average</span>
<span class="t" style="left:475px;top:644px;letter-spacing:-0.032px">consecutive wins</span>
<span class="t r" style="left:589px;width:300px;top:644px;">7</span>
<span class="t" style="left:925px;top:644px;letter-spacing:-0.168px">consecutive losses</span>
<span class="t r" style="left:1045px;width:300px;top:644px;">0</span>
<div style="left:473px;top:423px;width:875px;height:18px;background:#ffa0a0;border:1px solid #5c9ce0"></div>
<div style="left:20px;top:668px;width:1330px;height:1px;background:#000"></div>
<div style="left:194px;top:668px;width:55px;height:20px;background:#fff;border:1px solid #000;border-top:none;border-right:2px solid #000;border-bottom:2px solid #000"></div>
<span class="t gr" style="left:32.7px;top:670px;letter-spacing:-0.145px">Settings</span>
<span class="t gr" style="left:94.8px;top:670px;letter-spacing:-0.374px">Results</span>
<span class="t gr" style="left:152px;top:670px;letter-spacing:-0.312px">Graph</span>
<span class="t" style="left:204px;top:670px;letter-spacing:-0.105px">Report</span>
<span class="t gr" style="left:259px;top:670px;letter-spacing:-0.18px">Journal</span>
<div style="left:85px;top:672px;width:1px;height:14px;background:#6d6d6d"></div>
<div style="left:142px;top:672px;width:1px;height:14px;background:#6d6d6d"></div>
<div style="left:307px;top:672px;width:1px;height:14px;background:#6d6d6d"></div>
<div style="left:5px;top:692px;width:1349px;height:1px;background:#fff"></div>
<div style="left:5px;top:693px;width:1349px;height:1px;background:#a0a0a0"></div>
<span class="t" style="left:7.2px;top:699px;letter-spacing:-0.354px">For Help, press F1</span>
<span class="t" style="left:646px;top:699px;letter-spacing:0.024px">Default</span>
<div style="left:640px;top:698px;width:1px;height:18px;background:#a0a0a0"></div>
<div style="left:756px;top:698px;width:1px;height:18px;background:#a0a0a0"></div>
<div style="left:858px;top:698px;width:1px;height:18px;background:#a0a0a0"></div>
<div style="left:929px;top:698px;width:1px;height:18px;background:#a0a0a0"></div>
<div style="left:1000px;top:698px;width:1px;height:18px;background:#a0a0a0"></div>
<div style="left:1068px;top:698px;width:1px;height:18px;background:#a0a0a0"></div>
<div style="left:1138px;top:698px;width:1px;height:18px;background:#a0a0a0"></div>
<div style="left:1204px;top:698px;width:1px;height:18px;background:#a0a0a0"></div>
<svg class="abs" style="left:1210px;top:700px" width="24" height="13" shape-rendering="crispEdges"><rect x="0" y="0" width="2" height="10" fill="#5b7b00"/><rect x="0" y="10" width="2" height="3" fill="#002e4e"/><rect x="3" y="0" width="2" height="9" fill="#5b7b00"/><rect x="3" y="9" width="2" height="4" fill="#002e4e"/><rect x="6" y="0" width="2" height="8" fill="#5b7b00"/><rect x="6" y="8" width="2" height="5" fill="#002e4e"/><rect x="9" y="0" width="2" height="7" fill="#5b7b00"/><rect x="9" y="7" width="2" height="6" fill="#002e4e"/><rect x="12" y="0" width="2" height="5" fill="#5b7b00"/><rect x="12" y="5" width="2" height="8" fill="#002e4e"/><rect x="15" y="0" width="2" height="4" fill="#5b7b00"/><rect x="15" y="4" width="2" height="9" fill="#002e4e"/><rect x="18" y="0" width="2" height="3" fill="#5b7b00"/><rect x="18" y="3" width="2" height="10" fill="#002e4e"/><rect x="21" y="0" width="2" height="2" fill="#5b7b00"/><rect x="21" y="2" width="2" height="11" fill="#002e4e"/></svg>
<span class="t" style="left:1237.3px;top:699px;letter-spacing:-0.219px">13323/5 kb</span>
<svg class="abs" style="left:1338px;top:702px" width="16" height="16"><path d="M2 15.5L15.5 2M6 15.5L15.5 6M10 15.5L15.5 10" stroke="#b0b0b0" stroke-width="1.3" fill="none"/></svg>
<svg width="0" height="0" style="position:absolute"><defs>
<linearGradient id="gB" x1="0" y1="0" x2="0" y2="1"><stop offset="0" stop-color="#5b9bd8"/><stop offset="1" stop-color="#2d6cb5"/></linearGradient>
<linearGradient id="gG" x1="0" y1="0" x2="0" y2="1"><stop offset="0" stop-color="#5fe85f"/><stop offset="1" stop-color="#12a812"/></linearGradient>
<linearGradient id="gY" x1="0" y1="0" x2="1" y2="1"><stop offset="0" stop-color="#ffe680"/><stop offset="1" stop-color="#c8901c"/></linearGradient>
<radialGradient id="gL" cx="0.4" cy="0.35" r="0.7"><stop offset="0" stop-color="#ffffff"/><stop offset="1" stop-color="#b8d8f4"/></radialGradient>
</defs></svg>
<svg class="abs" style="left:7px;top:6px" width="16" height="16"><defs><linearGradient id="gT" x1="0" y1="0" x2="0" y2="1"><stop offset="0" stop-color="#a8a8a8"/><stop offset="0.180" stop-color="#626262"/><stop offset="0.550" stop-color="#3c3c3c"/><stop offset="1" stop-color="#6c6c6c"/></linearGradient></defs><rect x="0.200" y="0.100" width="15.600" height="15.600" rx="2.600" fill="url(#gT)"/><path d="M2.600 6L7 6.500L13.900 4.100L10.600 7.700L13.900 11.600L8.300 9.600L2.200 9.500L5.800 7.900Z" fill="#fff"/></svg>
<div style="left:5px;top:50px;width:1349px;height:1px;background:#a0a0a0"></div>
<div style="left:5px;top:51px;width:1349px;height:1px;background:#fff"></div>
<div class="ic" style="left:10px;top:32px"><svg width="15" height="15" viewBox="0 0 15 15"><rect x="0.5" y="0.5" width="10" height="8" rx="1" fill="#f4f8ff" stroke="#3f7fe0" stroke-dasharray="1.6 0.8"/><rect x="0.5" y="0.500" width="10" height="1.6" fill="#8fb6f0"/><path d="M2 5l1.500 -1.200l1.500 1.200l1.500 -1.200l1.500 1.200" stroke="#3f7fe0" stroke-width="0.9" fill="none"/><rect x="3.5" y="5.5" width="10.5" height="8.500" rx="1" fill="#f4f8ff" stroke="#3f7fe0" stroke-dasharray="1.6 0.8"/><rect x="3.5" y="5.5" width="10.5" height="1.6" fill="#8fb6f0"/><path d="M5.2 10l1.400 2l1.400 -2l1.400 2l1.400 -2l1.300 2" stroke="#3f7fe0" stroke-width="0.9" fill="none"/></svg></div>
<span class="t" style="left:32.5px;top:32px;font-size:12px;letter-spacing:-0.111px">File</span>
<span class="t" style="left:68.5px;top:32px;font-size:12px;letter-spacing:-0.049px">View</span>
<span class="t" style="left:111.5px;top:32px;font-size:12px;letter-spacing:-0.069px">Insert</span>
<span class="t" style="left:158.5px;top:32px;font-size:12px;letter-spacing:-0.141px">Charts</span>
<span class="t" style="left:210.5px;top:32px;font-size:12px;letter-spacing:0.297px">Tools</span>
<span class="t" style="left:257.5px;top:32px;font-size:12px;letter-spacing:0.302px">Window</span>
<span class="t" style="left:319.5px;top:32px;font-size:12px;letter-spacing:0.078px">Help</span>
<div style="left:1296px;top:31px;width:18px;height:18px;background:linear-gradient(#eaf2fb 0,#eaf2fb 35%,#dbe8f6 36%,#dbe8f6 100%);border:1px solid #8fa0b8"></div>
<div style="left:1315px;top:31px;width:18px;height:18px;background:linear-gradient(#eaf2fb 0,#eaf2fb 35%,#dbe8f6 36%,#dbe8f6 100%);border:1px solid #8fa0b8"></div>
<div style="left:1334px;top:31px;width:18px;height:18px;background:linear-gradient(#eaf2fb 0,#eaf2fb 35%,#dbe8f6 36%,#dbe8f6 100%);border:1px solid #8fa0b8"></div>
<svg class="abs" style="left:1296px;top:31px" width="56" height="18"><path d="M5 12H11" stroke="#5c6b7c" stroke-width="1.800"/><path d="M26.900 8V6.200H31.100V9.600H29.600" stroke="#5c6b7c" stroke-width="1.200" fill="none"/><path d="M26.600 5.900H31.500" stroke="#5c6b7c" stroke-width="1.400"/><rect x="24.600" y="8.600" width="4.500" height="3.600" stroke="#5c6b7c" stroke-width="1.200" fill="none"/><path d="M24.200 8.300H29.700" stroke="#5c6b7c" stroke-width="1.600"/><path d="M44.500 6.600L50.400 12.500M50.400 6.600L44.500 12.500" stroke="#5c6b7c" stroke-width="1.900" fill="none"/></svg>
<div style="left:5px;top:77px;width:812px;height:1px;background:#a0a0a0"></div>
<div style="left:5px;top:78px;width:813px;height:1px;background:#fff"></div>
<div style="left:816px;top:52px;width:1px;height:26px;background:#a0a0a0"></div>
<div style="left:817px;top:52px;width:1px;height:27px;background:#fff"></div>
<div style="left:7px;top:55px;width:3px;height:19px;background:repeating-linear-gradient(#8c8c8c 0,#8c8c8c 1px,transparent 1px,transparent 2px)"></div>
<div class="ic" style="left:16px;top:57px"><svg width="18" height="16" viewBox="0 0 18 16"><defs><radialGradient id="gP" cx="0.45" cy="0.4" r="0.65"><stop offset="0" stop-color="#7dff7d"/><stop offset="0.6" stop-color="#22d822"/><stop offset="1" stop-color="#12a812"/></radialGradient></defs><rect x="0.5" y="0.5" width="12" height="10" rx="1" fill="#fcfdff" stroke="#2f70bc" stroke-width="1"/><path d="M1 1.5H12" stroke="#4a8ad4" stroke-width="1"/><path d="M3.700 3.200V9M2.300 4.800L3.700 3.200L5.100 4.800M2.300 7.400L3.700 9L5.100 7.400" stroke="#7a9cc4" stroke-width="0.900" fill="none"/><path d="M9.0 3.2h4v3.800h3.900v4h-3.900v3.700h-4v-3.700H5.1v-4h3.900z" fill="url(#gP)" stroke="#0f8a0f" stroke-width="0.900"/></svg></div>
<div class="ic" style="left:37px;top:64px"><svg width="7" height="4" viewBox="0 0 7 4"><path d="M0.5 0.2H6.5L3.5 3.6Z" fill="#000"/></svg></div>
<div class="ic" style="left:53px;top:57px"><svg width="18" height="16" viewBox="0 0 18 16"><rect x="3.5" y="5.5" width="13" height="10" rx="1" fill="#fcfdff" stroke="#2f70bc" stroke-width="1"/><path d="M4 6.5H16" stroke="#4a8ad4" stroke-width="1"/><path d="M6 12.500H14.500M7.500 11.200L6 12.500L7.500 13.800M13 11.200L14.500 12.500L13 13.800" stroke="#7a9cc4" stroke-width="0.900" fill="none"/><rect x="0.5" y="0.5" width="13" height="10" rx="1" fill="#fcfdff" stroke="#2f70bc" stroke-width="1"/><path d="M1 1.5H13" stroke="#4a8ad4" stroke-width="1"/><path d="M3.300 3.200V8.500M2 4.600L3.300 3.200L4.600 4.600M2.500 7.500H11.500M10 6.200L11.500 7.500L10 8.800" stroke="#7a9cc4" stroke-width="0.900" fill="none"/></svg></div>
<div class="ic" style="left:74px;top:64px"><svg width="7" height="4" viewBox="0 0 7 4"><path d="M0.5 0.2H6.5L3.5 3.6Z" fill="#000"/></svg></div>
<div style="left:88px;top:54px;width:1px;height:21px;background:#8c8c8c"></div>
<div style="left:93px;top:53px;width:25px;height:22px;background-color:#f8f8f8;background-image:repeating-conic-gradient(#fff 0 25%,#ececec 0 50%);background-size:2px 2px;border-top:1px solid #8c8c8c;border-left:1px solid #8c8c8c;border-right:1px solid #fff;border-bottom:1px solid #fff"></div>
<div class="ic" style="left:97px;top:57px"><svg width="16" height="16" viewBox="0 0 16 16"><rect x="0.7" y="0.7" width="14.6" height="14.6" rx="1.2" fill="#fbfdff" stroke="url(#gB)" stroke-width="1.4"/><rect x="0.7" y="0.7" width="14.6" height="1.8" fill="#4a8bd0"/><path d="M9.5 4.5h4M9.5 6.500h4M2.5 10.5h3M2.5 12.5h3" stroke="#c0cfe2" stroke-width="0.8"/><path d="M5.4 3.200L8.800 6.600H6.800V9H4V6.600H2Z" fill="#28b428" stroke="#168016" stroke-width="0.6"/><path d="M9.800 14.400L13.200 11H11.200V8.400H8.400V11H6.400Z" fill="#f06a30" stroke="#c2441a" stroke-width="0.6"/></svg></div>
<div class="ic" style="left:126px;top:56.5px"><svg width="16" height="17" viewBox="0 0 16 17"><circle cx="7.500" cy="8.500" r="4.700" fill="none" stroke="#5c5c5c" stroke-width="1.150"/><path d="M7.500 1V6.500M7.500 10.500V16M0 8.500H5.500M9.500 8.500H15" stroke="#5c5c5c" stroke-width="1" shape-rendering="crispEdges"/><path d="M6 1.500H9M6 15.500H9M0.500 7V10M14.500 7V10" stroke="#5c5c5c" stroke-width="1" shape-rendering="crispEdges"/></svg></div>
<div class="ic" style="left:151px;top:56px"><svg width="19" height="17" viewBox="0 0 19 17"><path d="M1.700 2.400Q1.700 1.200 2.900 1.200H5.300L6.500 2.500H10.600Q11.700 2.500 11.700 3.600V9.600H1.700Z" fill="url(#gY)" stroke="#c09a30" stroke-width="0.800"/><path d="M1.700 4.400H11.700V9.800H1.700Z" fill="#ffee9c" stroke="#c8a23c" stroke-width="0.800"/><path d="M5.500 11.500V17" stroke="#333" stroke-width="1" stroke-dasharray="1 1" shape-rendering="crispEdges"/><path d="M13.400 5.200L15.200 9.300L19.100 9.700L16.200 12.500L17 16.700L13.400 14.600L9.800 16.700L10.600 12.500L7.700 9.700L11.600 9.300Z" fill="#ffdf55" stroke="#b88a18" stroke-width="0.900" stroke-linejoin="round"/></svg></div>
<div class="ic" style="left:181px;top:58px"><svg width="16" height="14" viewBox="0 0 16 14"><rect x="0.600" y="0.600" width="14.800" height="12.800" rx="1.300" fill="#fff" stroke="#2f70bc" stroke-width="1.200"/><rect x="1.200" y="1.200" width="2.300" height="11.600" fill="#3f7fc8"/><rect x="1.900" y="7" width="1" height="4.500" fill="#1c3c68"/><path d="M4.500 2.500h10M4.500 4.500h10M4.500 6.500h10M4.500 8.500h10" stroke="#b8cef0" stroke-width="0.800"/><rect x="5" y="1.700" width="1.200" height="1.200" fill="#e02020"/><rect x="5" y="3.800" width="1.200" height="1.200" fill="#222"/><rect x="5" y="5.900" width="1.200" height="1.200" fill="#222"/><rect x="5" y="8" width="1.200" height="1.200" fill="#e02020"/><rect x="1.900" y="1.900" width="1" height="1" fill="#111"/></svg></div>
<div style="left:205px;top:53px;width:25px;height:22px;background-color:#f8f8f8;background-image:repeating-conic-gradient(#fff 0 25%,#ececec 0 50%);background-size:2px 2px;border-top:1px solid #8c8c8c;border-left:1px solid #8c8c8c;border-right:1px solid #fff;border-bottom:1px solid #fff"></div>
<div class="ic" style="left:209px;top:57px"><svg width="18" height="17" viewBox="0 0 18 17"><rect x="0.5" y="0.5" width="12" height="12.5" rx="1" fill="#f4efe2" stroke="#b0a488" stroke-width="1"/><path d="M3.5 2.5v7M2.4 4h2.2M8.5 2v7M7.4 3.4h2.2M3 5.5h6" stroke="#5a5a5a" stroke-width="1"/><circle cx="8.3" cy="8" r="4.3" fill="#cfe3f8" fill-opacity="0.75" stroke="#5f9be0" stroke-width="1.3"/><rect x="6.8" y="5" width="2.6" height="5.4" fill="#8fa2b8" fill-opacity="0.8"/><path d="M11.6 11.4L16.6 16.2" stroke="#d0a020" stroke-width="2.2" stroke-linecap="round"/></svg></div>
<div style="left:234px;top:54px;width:1px;height:21px;background:#8c8c8c"></div>
<div class="ic" style="left:244px;top:57px"><svg width="17" height="18" viewBox="0 0 17 18"><path d="M1 0.7H8.5L12 4.2V13.4H1Z" fill="#fafafa" stroke="#666" stroke-width="1"/><path d="M8.5 0.7V4.2H12" fill="#e4e4e4" stroke="#666" stroke-width="0.9"/><path d="M3 3h3.5M3 5.5h6M3 7.5h6" stroke="#777" stroke-width="1"/><path d="M8.600 6.400h3.800v3.600h3.700v3.800h-3.700v3.600h-3.800v-3.600H4.900v-3.800h3.700z" fill="url(#gP)" stroke="#0f8a0f" stroke-width="0.900"/></svg></div>
<span class="t" style="left:263px;top:56px;font-size:12px;letter-spacing:-0.035px">New Order</span>
<div class="ic" style="left:332px;top:58px"><svg width="17" height="16" viewBox="0 0 17 16"><defs><linearGradient id="gK" x1="0.2" y1="0" x2="0.8" y2="1"><stop offset="0" stop-color="#fff27a"/><stop offset="0.450" stop-color="#f2cc3a"/><stop offset="1" stop-color="#c8901c"/></linearGradient></defs><path d="M0.500 8.800L0.700 10.600L8.200 15L15.700 9.200L15.500 7.500L8.300 13.400Z" fill="#a8701a" stroke="#9a6410" stroke-width="0.700" stroke-linejoin="round"/><path d="M5.600 0.500Q6.500 0.300 7.200 0.900L15.500 7.500L8.300 13.400L0.500 8.800Z" fill="url(#gK)" stroke="#b8841c" stroke-width="0.900" stroke-linejoin="round"/><path d="M1.600 9.400L8.300 13.400" stroke="#fff2a0" stroke-width="0.700"/></svg></div>
<div class="ic" style="left:359px;top:56px"><svg width="17" height="17" viewBox="0 0 17 17"><path d="M1.800 6.500Q3 12.500 7.600 16.200Q9 16.600 10 15.800Q13.500 11.500 14.600 6.500Z" fill="#ffe270" stroke="#d4a420" stroke-width="0.800"/><ellipse cx="8.200" cy="5.600" rx="7.800" ry="2.700" fill="#3f92d4" stroke="#2a72b4" stroke-width="0.700"/><ellipse cx="8.300" cy="3.800" rx="4" ry="3" fill="#5aaae6" stroke="#2a72b4" stroke-width="0.700"/><path d="M4.500 4.800Q8.300 6.800 12.100 4.800" stroke="#2a72b4" stroke-width="0.800" fill="none"/><circle cx="12.300" cy="11.900" r="3.900" fill="#e01818" stroke="#b00c0c" stroke-width="0.600"/><rect x="10.700" y="10.300" width="3.200" height="3.200" rx="0.500" fill="#fff"/></svg></div>
<span class="t" style="left:379.5px;top:56px;font-size:12px;letter-spacing:0.242px">AutoTrading</span>
<div style="left:454px;top:52px;width:1px;height:25px;background:#a0a0a0"></div>
<div style="left:455px;top:52px;width:1px;height:25px;background:#fff"></div>
<div style="left:458px;top:55px;width:3px;height:19px;background:repeating-linear-gradient(#8c8c8c 0,#8c8c8c 1px,transparent 1px,transparent 2px)"></div>
<div style="left:464px;top:53px;width:25px;height:22px;background-color:#f8f8f8;background-image:repeating-conic-gradient(#fff 0 25%,#ececec 0 50%);background-size:2px 2px;border-top:1px solid #8c8c8c;border-left:1px solid #8c8c8c;border-right:1px solid #fff;border-bottom:1px solid #fff"></div>
<div class="ic" style="left:469px;top:57px"><svg width="16" height="16" viewBox="0 0 16 16"><path d="M3.5 2.5V15.5M1 13.5H14.5" stroke="#555" stroke-width="1" shape-rendering="crispEdges"/><path d="M3.5 1.200L1.500 4.500H5.500ZM15.800 13.5L12.500 11.500V15.500Z" fill="#555"/><path d="M10.5 3.5V11.500M10.5 4.5H13M7 10.500H10.5" stroke="#18a018" stroke-width="1.4" fill="none"/></svg></div>
<div class="ic" style="left:497px;top:57px"><svg width="16" height="16" viewBox="0 0 16 16"><path d="M3.5 2.5V15.5M1 13.5H14.5" stroke="#555" stroke-width="1" shape-rendering="crispEdges"/><path d="M3.5 1.200L1.500 4.500H5.500ZM15.800 13.5L12.500 11.500V15.500Z" fill="#555"/><path d="M9.5 0V12" stroke="#0c7a0c" stroke-width="1.1"/><rect x="7.3" y="2.5" width="4.4" height="7.400" rx="0.6" fill="url(#gG)" stroke="#0c8a0c" stroke-width="0.9"/></svg></div>
<div class="ic" style="left:525px;top:57px"><svg width="16" height="16" viewBox="0 0 16 16"><path d="M3.5 2.5V15.5M1 13.5H14.5" stroke="#555" stroke-width="1" shape-rendering="crispEdges"/><path d="M3.5 1.200L1.500 4.500H5.500ZM15.800 13.5L12.500 11.500V15.500Z" fill="#555"/><path d="M2.5 11.200Q5.500 4.500 8.300 4.500Q10.500 4.800 13.800 9.500" stroke="#2a9a2a" stroke-width="1.3" fill="none"/></svg></div>
<div style="left:549px;top:54px;width:1px;height:21px;background:#8c8c8c"></div>
<div class="ic" style="left:557px;top:56px"><svg width="17" height="17" viewBox="0 0 17 17"><path d="M11 11.200L15.800 16" stroke="#c8a018" stroke-width="2.800" stroke-linecap="round"/><path d="M11 11.200L15.800 16" stroke="#f4e080" stroke-width="1" stroke-linecap="round"/><circle cx="6.800" cy="6.900" r="5.700" fill="url(#gL)" stroke="#3f86d6" stroke-width="1.400"/><path d="M3.6 6.900H10M6.800 3.700V10.100" stroke="#4a80c4" stroke-width="2.100"/></svg></div>
<div class="ic" style="left:585px;top:56px"><svg width="17" height="17" viewBox="0 0 17 17"><path d="M11 11.200L15.800 16" stroke="#c8a018" stroke-width="2.800" stroke-linecap="round"/><path d="M11 11.200L15.800 16" stroke="#f4e080" stroke-width="1" stroke-linecap="round"/><circle cx="6.800" cy="6.900" r="5.700" fill="url(#gL)" stroke="#3f86d6" stroke-width="1.400"/><path d="M3.6 6.900H10" stroke="#4a80c4" stroke-width="2.100"/></svg></div>
<div class="ic" style="left:614px;top:57px"><svg width="16" height="16" viewBox="0 0 16 16"><rect x="0" y="0" width="7.6" height="7.6" rx="0.8" fill="#3fa818"/><rect x="1.2" y="2.6" width="5.2" height="3.8" fill="#fff" fill-opacity="0.92"/><path d="M1.8 4.2h4" stroke="#3fa818" stroke-width="0.9"/><rect x="1" y="0.8" width="1" height="1" fill="#fff"/><rect x="8.2" y="0" width="7.6" height="7.6" rx="0.8" fill="#2858d0"/><rect x="9.399999999999999" y="2.6" width="5.2" height="3.8" fill="#fff" fill-opacity="0.92"/><path d="M10.0 4.2h4" stroke="#2858d0" stroke-width="0.9"/><rect x="9.2" y="0.8" width="1" height="1" fill="#fff"/><rect x="0" y="8.2" width="7.6" height="7.6" rx="0.8" fill="#2858d0"/><rect x="1.2" y="10.799999999999999" width="5.2" height="3.8" fill="#fff" fill-opacity="0.92"/><path d="M1.8 12.399999999999999h4" stroke="#2858d0" stroke-width="0.9"/><rect x="1" y="9.0" width="1" height="1" fill="#fff"/><rect x="8.2" y="8.2" width="7.6" height="7.6" rx="0.8" fill="#3fa818"/><rect x="9.399999999999999" y="10.799999999999999" width="5.2" height="3.8" fill="#fff" fill-opacity="0.92"/><path d="M10.0 12.399999999999999h4" stroke="#3fa818" stroke-width="0.9"/><rect x="9.2" y="9.0" width="1" height="1" fill="#fff"/></svg></div>
<div style="left:639px;top:54px;width:1px;height:21px;background:#8c8c8c"></div>
<div style="left:644px;top:53px;width:25px;height:22px;background-color:#f8f8f8;background-image:repeating-conic-gradient(#fff 0 25%,#ececec 0 50%);background-size:2px 2px;border-top:1px solid #8c8c8c;border-left:1px solid #8c8c8c;border-right:1px solid #fff;border-bottom:1px solid #fff"></div>
<div class="ic" style="left:649px;top:57px"><svg width="16" height="16" viewBox="0 0 16 16"><path d="M3.5 2.5V15.5M1 13.5H14.5" stroke="#555" stroke-width="1" shape-rendering="crispEdges"/><path d="M3.5 1.200L1.500 4.500H5.500ZM15.800 13.5L12.500 11.500V15.500Z" fill="#555"/><path d="M8 3.5L12.400 6.800L8 10.100Z" fill="#38c838" stroke="#189818" stroke-width="0.8"/></svg></div>
<div style="left:672px;top:53px;width:25px;height:22px;background-color:#f8f8f8;background-image:repeating-conic-gradient(#fff 0 25%,#ececec 0 50%);background-size:2px 2px;border-top:1px solid #8c8c8c;border-left:1px solid #8c8c8c;border-right:1px solid #fff;border-bottom:1px solid #fff"></div>
<div class="ic" style="left:677px;top:57px"><svg width="16" height="16" viewBox="0 0 16 16"><path d="M3.5 2.5V15.5M1 13.5H14.5" stroke="#555" stroke-width="1" shape-rendering="crispEdges"/><path d="M3.5 1.200L1.500 4.500H5.500ZM15.800 13.5L12.500 11.500V15.500Z" fill="#555"/><path d="M9.5 1.500V11.500" stroke="#2080c0" stroke-width="1.2"/><path d="M14.800 6.800H11.500" stroke="#d84010" stroke-width="1.2" fill="none"/><path d="M10.400 6.800L13 4.600V9Z" fill="#d84010"/></svg></div>
<div style="left:701px;top:54px;width:1px;height:21px;background:#8c8c8c"></div>
<div class="ic" style="left:711px;top:57px"><svg width="17" height="18" viewBox="0 0 17 18"><path d="M1 0.7H8.5L12 4.2V13.4H1Z" fill="#fafafa" stroke="#666" stroke-width="1"/><path d="M8.5 0.7V4.2H12" fill="#e4e4e4" stroke="#666" stroke-width="0.9"/><path d="M6.5 3.2Q4.6 3 4.6 5V9.6Q4.6 11 3.4 11M3.4 6.6H6.4" stroke="#6a5a30" stroke-width="1" fill="none"/><path d="M8.600 6.400h3.800v3.600h3.700v3.800h-3.700v3.600h-3.800v-3.600H4.900v-3.800h3.700z" fill="url(#gP)" stroke="#0f8a0f" stroke-width="0.900"/></svg></div>
<div class="ic" style="left:730px;top:64px"><svg width="7" height="4" viewBox="0 0 7 4"><path d="M0.5 0.2H6.5L3.5 3.6Z" fill="#000"/></svg></div>
<div class="ic" style="left:747px;top:57px"><svg width="17" height="17" viewBox="0 0 17 17"><circle cx="8.2" cy="8.2" r="7.4" fill="#2a78d0" stroke="#1a58a8" stroke-width="0.8"/><circle cx="8.2" cy="8.2" r="5.2" fill="#f4f8fc" stroke="#9cc0ec" stroke-width="0.6"/><path d="M8.2 4.4V8.4H11" stroke="#333" stroke-width="1.2" fill="none"/><path d="M8.2 3.4v0.8M8.2 12.2v0.8M3.4 8.2h0.8M12.2 8.2h0.8" stroke="#7aa" stroke-width="0.8"/></svg></div>
<div class="ic" style="left:767px;top:64px"><svg width="7" height="4" viewBox="0 0 7 4"><path d="M0.5 0.2H6.5L3.5 3.6Z" fill="#000"/></svg></div>
<div class="ic" style="left:784px;top:58px"><svg width="17" height="15" viewBox="0 0 17 15"><rect x="0.600" y="0.600" width="15.300" height="13.300" rx="0.800" fill="#fff" stroke="#2f70bc" stroke-width="1.200"/><rect x="0.600" y="0.600" width="15.300" height="2" fill="#4a8bd0"/><path d="M1 7.700H15.600" stroke="#4a8bd0" stroke-width="1"/><path d="M2.600 6.200L5 5.200L7 5.600L9 4.400L11 5L13.600 4" stroke="#a82808" stroke-width="1.100" fill="none"/><path d="M2.600 11.600L5 10.600L7 11.400L9.400 9.800L11.400 11.200L13.600 10.600" stroke="#189018" stroke-width="1.100" fill="none"/></svg></div>
<div class="ic" style="left:804px;top:64px"><svg width="7" height="4" viewBox="0 0 7 4"><path d="M0.5 0.2H6.5L3.5 3.6Z" fill="#000"/></svg></div>
<div style="left:1149px;top:52px;width:172px;height:24px;background:#fff;border:1px solid #a8a8a8;border-top:none"></div>
<div class="ic" style="left:1301px;top:57px"><svg width="14" height="14" viewBox="0 0 14 14"><path d="M6.300 7.700L1.700 12.300" stroke="#2458c8" stroke-width="2.400" stroke-linecap="round"/><circle cx="9" cy="5" r="3.900" fill="#fff" stroke="#3f7fe0" stroke-width="1.500"/></svg></div>
<div style="left:1321px;top:52px;width:31px;height:24px;background:linear-gradient(#eeeeee,#e2e2e2);border:1px solid #a8a8a8;border-top:none;border-left:1px solid #d0d0d0"></div>
<div class="ic" style="left:1328px;top:56.2px"><svg width="17" height="17" viewBox="0 0 17 17"><path d="M1 0.800H15.200Q16 0.800 16 1.600V11.400Q16 12.200 15.200 12.200H6.800Q6.800 14.500 5.600 16.200Q3.600 14.800 3.300 12.200H1Q0.200 12.200 0.200 11.400V1.600Q0.200 0.800 1 0.800Z" fill="#6682b4"/><text x="8.400" y="10.400" font-family="Liberation Sans,sans-serif" font-weight="bold" font-size="11" text-anchor="middle" fill="#fff">5</text></svg></div>
<div style="left:5px;top:104px;width:335px;height:1px;background:#a0a0a0"></div>
<div style="left:5px;top:105px;width:335px;height:1px;background:#fff"></div>
<div style="left:7px;top:82px;width:3px;height:19px;background:repeating-linear-gradient(#8c8c8c 0,#8c8c8c 1px,transparent 1px,transparent 2px)"></div>
<div style="left:13px;top:80px;width:25px;height:22px;background-color:#f8f8f8;background-image:repeating-conic-gradient(#fff 0 25%,#ececec 0 50%);background-size:2px 2px;border-top:1px solid #8c8c8c;border-left:1px solid #8c8c8c;border-right:1px solid #fff;border-bottom:1px solid #fff"></div>
<div class="ic" style="left:21px;top:85px"><svg width="9" height="15" viewBox="0 0 9 15"><path d="M0.5 0.5V11.5L3.2 9L5.4 14L7.4 13.1L5.2 8.2H8.8Z" fill="#4a4a4a"/></svg></div>
<div class="ic" style="left:45px;top:84px"><svg width="17" height="17" viewBox="0 0 17 17"><path d="M8.5 1V7M8.5 10V16M1 8.500H7M10 8.500H16" stroke="#444" stroke-width="1" shape-rendering="crispEdges"/><rect x="8" y="8" width="1" height="1" fill="#999"/></svg></div>
<div style="left:70px;top:81px;width:1px;height:21px;background:#8c8c8c"></div>
<div class="ic" style="left:86px;top:86px"><svg width="3" height="14" viewBox="0 0 3 14"><path d="M1.5 0V13" stroke="#444" stroke-width="1" shape-rendering="crispEdges"/></svg></div>
<div class="ic" style="left:109px;top:91px"><svg width="14" height="3" viewBox="0 0 14 3"><path d="M1 1.500H13" stroke="#444" stroke-width="1" shape-rendering="crispEdges"/></svg></div>
<div class="ic" style="left:137.5px;top:86px"><svg width="13" height="13" viewBox="0 0 13 13"><path d="M0.5 12L12 1" stroke="#4a4a4a" stroke-width="1.1"/></svg></div>
<div class="ic" style="left:163px;top:83px"><svg width="17" height="18" viewBox="0 0 17 18"><path d="M0.500 10L13 2.500M2 15L14.500 7.500" stroke="#4a4a4a" stroke-width="1.200"/><path d="M4.800 4L2.800 15.500M8.800 1.500L6.800 13M12.600 0L10.800 10.500" stroke="#4a4a4a" stroke-width="1.100"/><text x="11" y="17.600" font-family="Liberation Sans,sans-serif" font-weight="bold" font-size="7" fill="#444">E</text></svg></div>
<div class="ic" style="left:193px;top:84px"><svg width="16" height="17" viewBox="0 0 16 17"><path d="M0 1.5H13M0 4.5H13M0 8.5H13M0 12.5H10" stroke="#333" stroke-width="1" stroke-dasharray="1 1" shape-rendering="crispEdges"/><text x="10.6" y="16.8" font-family="Liberation Sans,sans-serif" font-weight="bold" font-size="7" fill="#444">F</text></svg></div>
<span class="t" style="left:223.7px;top:85.5px;font-size:12px;color:#505050">A</span>
<div class="ic" style="left:248px;top:84px"><svg width="15" height="15" viewBox="0 0 15 15"><rect x="1.500" y="1.500" width="12" height="13" fill="none" stroke="#444" stroke-width="1" stroke-dasharray="1 1" shape-rendering="crispEdges"/><path d="M4 5H11.200M7.600 5V11.800" stroke="#4a4a4a" stroke-width="1.700"/></svg></div>
<div class="ic" style="left:276px;top:85px"><svg width="15" height="15" viewBox="0 0 15 15"><path d="M4.600 0.400L7.800 3.600L4.600 6.800L1.400 3.600Z" fill="#444"/><path d="M11.900 8.300L15.100 11.500L11.900 14.700L8.700 11.500Z" fill="#444"/><path d="M2 8L5.300 10.800L9.200 5.300" stroke="#444" stroke-width="1.300" fill="none"/></svg></div>
<div class="ic" style="left:295px;top:91px"><svg width="7" height="4" viewBox="0 0 7 4"><path d="M0.5 0.2H6.5L3.5 3.6Z" fill="#000"/></svg></div>
<div style="left:307px;top:79px;width:1px;height:25px;background:#a0a0a0"></div>
<div style="left:308px;top:79px;width:1px;height:25px;background:#fff"></div>
<div style="left:311px;top:82px;width:3px;height:19px;background:repeating-linear-gradient(#8c8c8c 0,#8c8c8c 1px,transparent 1px,transparent 2px)"></div>
<div style="left:429px;top:80px;width:25px;height:22px;background-color:#f8f8f8;background-image:repeating-conic-gradient(#fff 0 25%,#ececec 0 50%);background-size:2px 2px;border-top:1px solid #8c8c8c;border-left:1px solid #8c8c8c;border-right:1px solid #fff;border-bottom:1px solid #fff"></div>
<span class="t" style="left:322.5px;top:84.5px;font-size:9px;color:#b4b4b4">M1</span>
<span class="t" style="left:350.5px;top:84.5px;font-size:9px;color:#b4b4b4">M5</span>
<span class="t" style="left:376.5px;top:84.5px;font-size:9px;color:#b4b4b4">M15</span>
<span class="t" style="left:404.3px;top:84.5px;font-size:9px;color:#b4b4b4">M30</span>
<span class="t" style="left:435.3px;top:84.5px;font-size:9px;color:#b4b4b4">H1</span>
<span class="t" style="left:462.5px;top:84.5px;font-size:9px;color:#b4b4b4">H4</span>
<span class="t" style="left:491.3px;top:84.5px;font-size:9px;color:#b4b4b4">D1</span>
<span class="t" style="left:519.2px;top:84.5px;font-size:9px;color:#b4b4b4">W1</span>
<span class="t" style="left:545.3px;top:84.5px;font-size:9px;color:#b4b4b4">MN</span>
<div style="left:568px;top:79px;width:1px;height:25px;background:#a0a0a0"></div>
<div style="left:569px;top:79px;width:1px;height:25px;background:#fff"></div>
<div style="left:340px;top:377px;width:2px;height:20px;background:linear-gradient(90deg,#777,#505050)"></div>
<div style="left:340px;top:377px;width:1013px;height:1px;background:#000"></div>
<span class="t gr" style="left:357.0px;top:379px;font-size:12px;letter-spacing:-0.818px">GBPUSD,H4</span>
<span class="t gr" style="left:440.8px;top:379px;font-size:12px;letter-spacing:-0.464px">USDCHF,M1</span>
<span class="t gr" style="left:527.9px;top:379px;font-size:12px;letter-spacing:-0.29px">OIL.WTI.,H1</span>
<span class="t gr" style="left:614.1px;top:379px;font-size:12px;letter-spacing:-0.664px">EURGBP.,H1</span>
<span class="t gr" style="left:701.7px;top:379px;font-size:12px;letter-spacing:-0.641px">EURUSD,Daily</span>
<span class="t gr" style="left:797.3px;top:379px;font-size:12px;letter-spacing:-0.67px">DE.30..,H1</span>
<span class="t gr" style="left:872.3px;top:379px;font-size:12px;letter-spacing:-0.521px">OILs..,H1</span>
<span class="t gr" style="left:940.5px;top:379px;font-size:12px;letter-spacing:-0.52px">EURUSD,H1 (visual)</span>
<span class="t gr" style="left:1064.6px;top:379px;font-size:12px;letter-spacing:-0.52px">EURUSD,H1 (visual)</span>
<span class="t gr" style="left:1188.8px;top:379px;font-size:12px;letter-spacing:-0.52px">EURUSD,H1 (visual)</span>
<div style="left:430px;top:380px;width:1px;height:14px;background:#6d6d6d"></div>
<div style="left:518px;top:380px;width:1px;height:14px;background:#6d6d6d"></div>
<div style="left:602px;top:380px;width:1px;height:14px;background:#6d6d6d"></div>
<div style="left:690px;top:380px;width:1px;height:14px;background:#6d6d6d"></div>
<div style="left:785.5px;top:380px;width:1px;height:14px;background:#6d6d6d"></div>
<div style="left:861.5px;top:380px;width:1px;height:14px;background:#6d6d6d"></div>
<div style="left:930px;top:380px;width:1px;height:14px;background:#6d6d6d"></div>
<div style="left:1054px;top:380px;width:1px;height:14px;background:#6d6d6d"></div>
<div style="left:1178px;top:380px;width:1px;height:14px;background:#6d6d6d"></div>
<div style="left:1302px;top:380px;width:1px;height:14px;background:#6d6d6d"></div>
<div style="left:1313px;top:380px;width:1px;height:11px;background:#8c8c8c"></div>
<svg class="abs" style="left:1320px;top:381px" width="26" height="10"><path d="M5 1L1.500 4.500L5 8Z" fill="#9a9a9a"/><path d="M19.500 1L23 4.500L19.500 8Z" fill="#000"/></svg>
</body></html>
